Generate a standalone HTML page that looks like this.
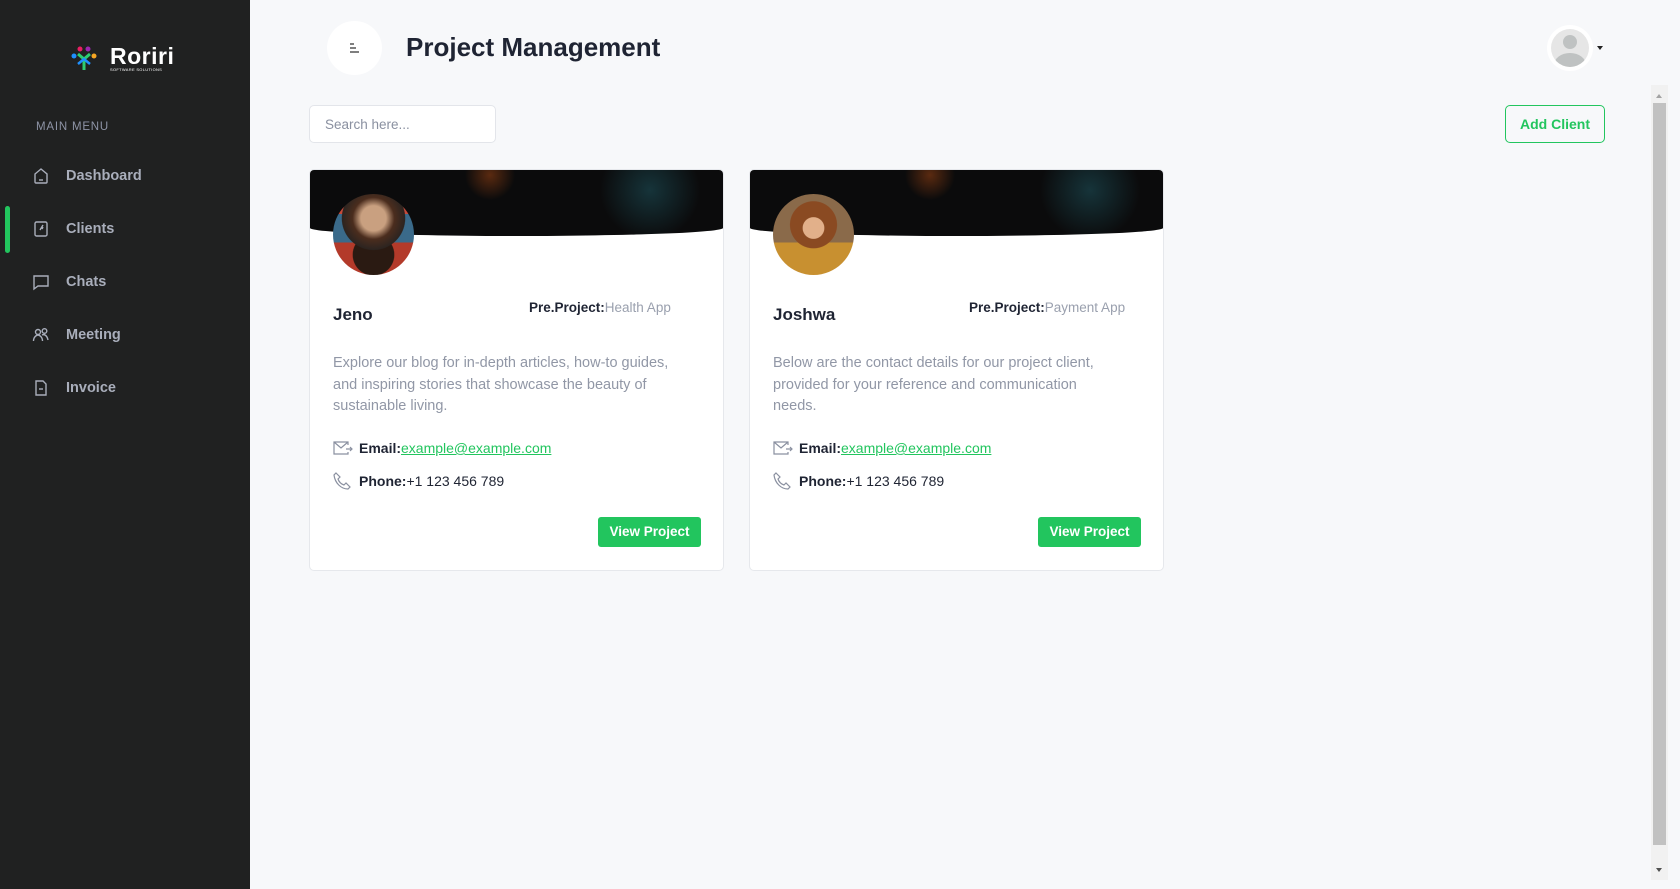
<!DOCTYPE html>
<html><head><style>
*{box-sizing:border-box;margin:0;padding:0}
body{width:1680px;height:889px;overflow:hidden;background:#f7f8fa;font-family:"Liberation Sans",sans-serif;position:relative}
.sb{position:absolute;left:0;top:0;width:250px;height:889px;background:#202121}
.logo{position:absolute;left:70px;top:44px;display:flex;align-items:center}
.logo .t{color:#fff;font-weight:bold;font-size:23px;letter-spacing:.5px;line-height:22px}
.logo .s{color:#fff;font-size:4px;letter-spacing:.3px}
.mm{position:absolute;left:36px;top:121px;color:#8e94a6;font-size:11.5px;letter-spacing:.8px}
.it{position:absolute;left:32px;display:flex;align-items:center;color:#a9aebb;font-size:14.5px;font-weight:bold}
.it svg{width:18px;height:18px;margin-right:16px}
.bar{position:absolute;left:5px;top:206px;width:5px;height:47px;background:#22c55e;border-radius:3px}
.tog{position:absolute;left:327px;top:21px;width:55px;height:54px;border-radius:50%;background:#fff}
h1{position:absolute;left:406px;top:32px;font-size:26px;font-weight:bold;color:#1f2433}
.av{position:absolute;left:1547px;top:25px;width:46px;height:46px;border-radius:50%;background:#fff;padding:4px}
.av div{width:38px;height:38px;border-radius:50%;background:#e6e6e6;overflow:hidden;position:relative}
.caret{position:absolute;left:1597px;top:46px;border:3px solid transparent;border-top:4px solid #222}
.scr{position:absolute;left:1651px;top:85px;width:17px;height:795px;background:#f1f1f1}
.scr i{position:absolute;left:2px;top:18px;width:13px;height:742px;background:#c1c1c1}
.search{position:absolute;left:309px;top:105px;width:187px;height:38px;border:1px solid #e3e5ea;border-radius:5px;background:#fff;color:#8a90a0;font-size:13.5px;padding:11px 15px}
.add{position:absolute;left:1505px;top:105px;width:100px;height:38px;border:1px solid #22c55e;border-radius:5px;color:#22c55e;font-size:14px;font-weight:bold;text-align:center;line-height:36px}
.card{position:absolute;top:169px;width:415px;height:402px;background:#fff;border:1px solid #e6e8ec;border-radius:5px;overflow:hidden}
.ban{position:absolute;left:0;top:0;width:100%;height:66px;background:radial-gradient(circle at 340px 20px,#16343a 0,transparent 50px),radial-gradient(circle at 180px 5px,#5a2a10 0,transparent 25px),#0b0b0c;border-radius:0 0 50% 50%/0 0 8px 8px}
.pic{position:absolute;left:23px;top:24px;width:81px;height:81px;border-radius:50%}
.nm{position:absolute;left:23px;top:135px;font-size:17px;font-weight:bold;color:#1f2433}
.pp{position:absolute;left:219px;top:130px;font-size:13.5px;font-weight:bold;color:#1f2433}
.pp span{font-weight:normal;color:#9aa0ae}
.ds{position:absolute;left:23px;top:183px;width:348px;font-size:14.5px;line-height:21.5px;color:#9197a6}
.row{position:absolute;left:23px;display:flex;align-items:center;font-size:14px;color:#1f2433}
.row b{margin-left:6px}
.row a{color:#22c55e;text-decoration:underline}
.btn{position:absolute;left:288px;top:347px;width:103px;height:30px;background:#22c55e;color:#fff;font-size:13.5px;font-weight:bold;text-align:center;line-height:30px;border-radius:3px}
</style></head><body>
<div class="sb">
 <div class="logo">
  <svg width="28" height="28" viewBox="0 0 28 28"><circle cx="4" cy="12" r="2.5" fill="#1e90ff"/><circle cx="24" cy="12" r="2.5" fill="#f5a623"/><circle cx="10" cy="5" r="2.5" fill="#e91e63"/><circle cx="18" cy="5" r="2.5" fill="#9c27b0"/><path d="M8 10l6 5 6-5M14 15v11" stroke="#2ecc71" stroke-width="3" fill="none"/><path d="M8 20l6-5 6 5" stroke="#1e90ff" stroke-width="2.5" fill="none"/></svg>
  <div style="margin-left:12px"><div class="t">Roriri</div><div class="s">SOFTWARE SOLUTIONS</div></div>
 </div>
 <div class="mm">MAIN MENU</div>
 <div class="bar"></div>
 <div class="it" style="top:167px"><svg viewBox="0 0 18 18" fill="none" stroke="#a9aebb" stroke-width="1.4"><path d="M3 7l6-5 6 5v8a1 1 0 0 1-1 1H4a1 1 0 0 1-1-1z"/><path d="M7 13h4"/></svg>Dashboard</div>
 <div class="it" style="top:220px"><svg viewBox="0 0 18 18" fill="none" stroke="#a9aebb" stroke-width="1.4"><rect x="3" y="2" width="12" height="14" rx="1.5"/><path d="M11 5l-3 5M10 9l1-2"/></svg>Clients</div>
 <div class="it" style="top:273px"><svg viewBox="0 0 18 18" fill="none" stroke="#a9aebb" stroke-width="1.4"><path d="M2 3h14v10H6l-4 3z"/></svg>Chats</div>
 <div class="it" style="top:326px"><svg viewBox="0 0 18 18" fill="none" stroke="#a9aebb" stroke-width="1.4"><circle cx="6" cy="6" r="2.5"/><circle cx="12.5" cy="5" r="2.3"/><path d="M1.5 15c0-4 3-6 4.5-6s4.5 2 4.5 6M10 9c2-1 5 0 6 5"/></svg>Meeting</div>
 <div class="it" style="top:379px"><svg viewBox="0 0 18 18" fill="none" stroke="#a9aebb" stroke-width="1.4"><path d="M4 2h7l3 3v11H4z"/><path d="M7 10h4"/></svg>Invoice</div>
</div>
<div class="tog"><svg width="55" height="54" viewBox="0 0 55 54"><path d="M23 23h4M23 27h6M23 31h9" stroke="#333" stroke-width="1.2"/></svg></div>
<h1>Project Management</h1>
<div class="av"><div><span style="position:absolute;left:12px;top:6px;width:14px;height:14px;border-radius:50%;background:#bfc2c2"></span><span style="position:absolute;left:3px;top:24px;width:32px;height:24px;border-radius:50%;background:#bfc2c2"></span></div></div>
<div class="caret"></div>
<div class="scr"><i></i><span style="position:absolute;left:5px;top:6px;border:3.5px solid transparent;border-bottom:4px solid #a3a3a3"></span><span style="position:absolute;left:5px;top:783px;border:3.5px solid transparent;border-top:4px solid #505050"></span></div>
<div class="search">Search here...</div>
<div class="add">Add Client</div>

<div class="card" style="left:309px">
 <div class="ban"></div>
 <div class="pic" style="background:radial-gradient(circle at 50% 30%,#c9a080 0 18%,#4b2d1e 30%,#2c2420 45%,transparent 46%),radial-gradient(circle at 50% 75%,#2a1a12 0 28%,transparent 29%),linear-gradient(#c64a3a 0 25%,#3a6a8a 25% 60%,#b33a2a 60%)"></div>
 <div class="nm">Jeno</div>
 <div class="pp">Pre.Project:<span>Health App</span></div>
 <div class="ds">Explore our blog for in-depth articles, how-to guides, and inspiring stories that showcase the beauty of sustainable living.</div>
 <div class="row" style="top:270px"><svg width="20" height="16" viewBox="0 0 20 16" fill="none" stroke="#8a90a0" stroke-width="1.2"><path d="M15 12v2H1V2h14v3M1 2l7 6 7-6M13 9h6M17 7l2 2-2 2"/></svg><b>Email:</b><a>example@example.com</a></div>
 <div class="row" style="top:302px"><svg width="20" height="18" viewBox="0 0 20 18" fill="none" stroke="#8a90a0" stroke-width="1.2"><path d="M3 1l4 4-2 2c1 3 3 5 6 6l2-2 4 4-2 2C8 17 2 11 1 3z"/></svg><b>Phone:</b><span>+1 123 456 789</span></div>
 <div class="btn">View Project</div>
</div>

<div class="card" style="left:749px">
 <div class="ban"></div>
 <div class="pic" style="background:radial-gradient(circle at 50% 42%,#e2b08a 0 17%,transparent 18%),radial-gradient(circle at 50% 38%,#8a4a22 0 36%,transparent 37%),linear-gradient(#8a6a4a 0 60%,#c89030 60%)"></div>
 <div class="nm">Joshwa</div>
 <div class="pp">Pre.Project:<span>Payment App</span></div>
 <div class="ds">Below are the contact details for our project client, provided for your reference and communication needs.</div>
 <div class="row" style="top:270px"><svg width="20" height="16" viewBox="0 0 20 16" fill="none" stroke="#8a90a0" stroke-width="1.2"><path d="M15 12v2H1V2h14v3M1 2l7 6 7-6M13 9h6M17 7l2 2-2 2"/></svg><b>Email:</b><a>example@example.com</a></div>
 <div class="row" style="top:302px"><svg width="20" height="18" viewBox="0 0 20 18" fill="none" stroke="#8a90a0" stroke-width="1.2"><path d="M3 1l4 4-2 2c1 3 3 5 6 6l2-2 4 4-2 2C8 17 2 11 1 3z"/></svg><b>Phone:</b><span>+1 123 456 789</span></div>
 <div class="btn">View Project</div>
</div>
</body></html>
